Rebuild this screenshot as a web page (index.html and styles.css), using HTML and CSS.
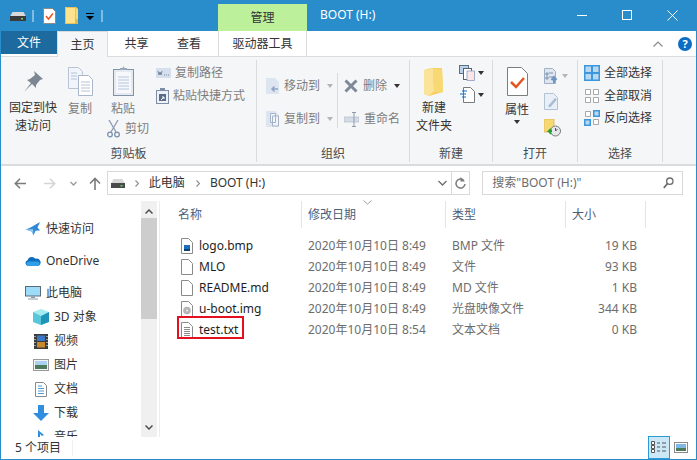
FILE: index.html
```html
<!DOCTYPE html>
<html lang="zh-CN">
<head>
<meta charset="utf-8">
<title>BOOT (H:)</title>
<link rel="stylesheet" href="styles.css">
</head>
<body>
<div class="window">
  <header class="titlebar">
    <div class="qat">
      <svg class="ic-drive" width="16" height="9" viewBox="0 0 16 9"><path d="M2.500 0h11L16 4.500V9H0V4.500z" fill="#d8d8d8"/><rect y="4" width="16" height="5" fill="#3a3a3a"/><rect x="11" y="6" width="2" height="1.500" fill="#5fd35f"/></svg>
      <span class="qat-sep"></span>
      <svg class="ic-qat-doc" width="13" height="16" viewBox="0 0 13 16"><path d="M.5.500h9l3 3v12H.5z" fill="#fff" stroke="#8a8a8a"/><path d="M3 8l2.500 3L10 5.500" fill="none" stroke="#e8541f" stroke-width="1.500"/></svg>
      <svg class="ic-qat-folder" width="13" height="17" viewBox="0 0 13 17"><path d="M0 0h11l2 2v15H0z" fill="#fbd971"/><path d="M.5.500h10v16H.500z" fill="#fde38e" stroke="#e8c15a"/><rect x="10" y="12" width="3" height="5" fill="#e0b84f"/></svg>
      <svg class="ic-qat-drop" width="8" height="8" viewBox="0 0 8 8"><rect x="0" y="0" width="8" height="1" fill="#000"/><path d="M0 3h8L4 7z" fill="#000"/></svg>
      <span class="qat-sep qat-sep-end"></span>
    </div>
    <div class="context-tab">管理</div>
    <div class="title">BOOT (H:)</div>
    <div class="win-controls">
      <svg width="11" height="11" viewBox="0 0 11 11"><path d="M0 5.500h10" stroke="#fff"/></svg>
      <svg width="11" height="11" viewBox="0 0 11 11"><rect x=".5" y=".5" width="9" height="9" fill="none" stroke="#fff"/></svg>
      <svg width="11" height="11" viewBox="0 0 11 11"><path d="M.5.500l10 10M10.500.500l-10 10" stroke="#fff" fill="none"/></svg>
    </div>
  </header>

  <nav class="tabs">
    <div class="tab tab-file">文件</div>
    <div class="tab tab-home">主页</div>
    <div class="tab tab-share">共享</div>
    <div class="tab tab-view">查看</div>
    <div class="tab tab-tools">驱动器工具</div>
    <div class="tabs-right">
      <svg width="10" height="6" viewBox="0 0 10 6"><path d="M.5 5.500L5 1l4.500 4.500" fill="none" stroke="#8a8a8a" stroke-width="1.200"/></svg>
      <svg width="14" height="14" viewBox="0 0 14 14"><circle cx="7" cy="7" r="7" fill="#0b6cc4"/><text x="7" y="11" text-anchor="middle" class="help-q">?</text></svg>
    </div>
  </nav>

  <section class="ribbon">
    <div class="group g-clip">
      <div class="group-body">
        <div class="big b-pin">
          <svg width="22" height="22" viewBox="0 0 22 22"><path d="M12 1l9 8-3 1-4 5 0 3-4-4-8 8 7-9-4-3 3-1 5-4z" fill="#7c8793"/></svg>
          <span class="big-text">固定到快<br>速访问</span>
        </div>
        <div class="big b-copy dim">
          <svg width="25" height="29" viewBox="0 0 25 29"><path d="M.5.500h10l4 4v17H.500z" fill="#f1f4fa" stroke="#b9c3d3"/><path d="M10.500 8.500h10l4 4v16h-14z" fill="#fff" stroke="#a9b6c9"/><path d="M13 15h9M13 18h9M13 21h9M13 24h9M3 6h6M3 9h6M3 12h6" stroke="#b5c2d6"/></svg>
          <span class="big-text">复制</span>
        </div>
        <div class="col-paste">
          <div class="big b-paste dim">
            <svg width="21" height="30" viewBox="0 0 21 30"><rect x=".5" y="3.500" width="20" height="26" fill="#e4e9f2" stroke="#8492a8"/><rect x="3" y="6" width="15" height="21" fill="#f6f8fc"/><path d="M5 11h11M5 14h11M5 17h11M5 20h11M5 23h11" stroke="#b8c6dc"/><path d="M7 4V2h2.500L10.500 0l1 2H14v2z" fill="#9ca9bc"/></svg>
            <span class="big-text">粘贴</span>
          </div>
          <div class="row-cut dim">
            <svg width="13" height="18" viewBox="0 0 13 18"><path d="M2 0l7 12M11 0L4 12" stroke="#8d9bb0" stroke-width="1.300" fill="none"/><circle cx="3" cy="14.500" r="2.300" fill="none" stroke="#7b90ad" stroke-width="1.300"/><circle cx="10" cy="14.500" r="2.300" fill="none" stroke="#7b90ad" stroke-width="1.300"/></svg>
            <span>剪切</span>
          </div>
        </div>
        <div class="col-small dim">
          <div class="small-row">
            <svg width="15" height="10" viewBox="0 0 15 10"><rect width="15" height="10" fill="#d6dfee"/><path d="M2 3l1 4 1-3 1 3 1-4M8 7h1M10 7h1M12 7h1" stroke="#65738a" fill="none" stroke-width=".8"/></svg>
            <span>复制路径</span>
          </div>
          <div class="small-row">
            <svg width="13" height="16" viewBox="0 0 13 16"><rect x=".5" y="2.500" width="12" height="13" fill="#eef2f8" stroke="#7f8ea5"/><rect x="4" y="0" width="5" height="3" fill="#7f8ea5"/><rect x="3" y="6" width="7" height="7" fill="#5b6b84"/><path d="M5 12l3-3M6 9h2v2" stroke="#fff" fill="none"/></svg>
            <span>粘贴快捷方式</span>
          </div>
        </div>
      </div>
      <div class="group-label">剪贴板</div>
    </div>

    <div class="group g-org">
      <div class="group-body">
        <div class="org-col dim">
          <div class="org-row">
            <svg width="13" height="16" viewBox="0 0 13 16"><path d="M0 0h9l4 4v12H0z" fill="#dde5f0"/><path d="M12 11H6M8.500 8.500L6 11l2.500 2.500" stroke="#8fa5c4" stroke-width="1.500" fill="none"/></svg>
            <span>移动到</span><i class="caret caret-gray"></i>
          </div>
          <div class="org-row">
            <svg width="13" height="16" viewBox="0 0 13 16"><path d="M0 0h9l4 4v12H0z" fill="#dde5f0"/><path d="M4.500 2.500h5v9h-5zM6.500 5h6v10h-6z" fill="#f2f5fa" stroke="#a4b3c8"/></svg>
            <span>复制到</span><i class="caret caret-gray"></i>
          </div>
        </div>
        <span class="org-sep"></span>
        <div class="org-col org-col-2 dim">
          <div class="org-row">
            <svg width="14" height="14" viewBox="0 0 14 14"><path d="M1.500 1.500l11 11M12.500 1.500l-11 11" stroke="#7e8a99" stroke-width="3"/></svg>
            <span>删除</span><i class="caret caret-dark"></i>
          </div>
          <div class="org-row">
            <svg width="15" height="15" viewBox="0 0 15 15"><rect x="0" y="5" width="15" height="5" fill="#d5dce6" stroke="#aab5c4" stroke-width=".6"/><path d="M10 .500v14M8 .500h4M8 14.500h4" stroke="#8e9bad" fill="none"/></svg>
            <span>重命名</span>
          </div>
        </div>
      </div>
      <div class="group-label">组织</div>
    </div>

    <div class="group g-new">
      <div class="group-body">
        <div class="big b-newfolder">
          <svg width="20" height="28" viewBox="0 0 20 28"><path d="M0 2l8-2h10l1 24-14 4-5-2z" fill="#f6cf60"/><path d="M0 2c3 0 8-1 9-2l1 23-5 5-5-2z" fill="#fbe49a"/><path d="M9 1h9l1 23H10z" fill="#f8d873"/></svg>
          <span class="big-text">新建<br>文件夹</span>
        </div>
        <div class="new-side">
          <div class="side-row">
            <svg width="16" height="16" viewBox="0 0 16 16"><rect x=".5" y=".5" width="9" height="8" fill="#bcd2e8" stroke="#5a7086"/><rect x="4.500" y="3.500" width="8" height="11" fill="#fff" stroke="#56626f"/><rect x="8" y="6" width="7.500" height="9.500" fill="#fbe6e6" stroke="#8d9cc0" stroke-width=".8"/></svg>
            <i class="caret caret-dark"></i>
          </div>
          <div class="side-row">
            <svg width="16" height="16" viewBox="0 0 16 16"><path d="M4.500.500h7l4 4v11h-11z" fill="#fff" stroke="#7a7a7a"/><path d="M3 4h5M1 7h6M3 10h4" stroke="#0b6cc4" fill="none"/></svg>
            <i class="caret caret-dark"></i>
          </div>
        </div>
      </div>
      <div class="group-label">新建</div>
    </div>

    <div class="group g-open">
      <div class="group-body">
        <div class="big b-props">
          <svg width="21" height="29" viewBox="0 0 21 29"><path d="M.5.500h14l6 6v22H.500z" fill="#fff" stroke="#7d7d7d"/><path d="M4 15l5 5 8-9" fill="none" stroke="#e8541f" stroke-width="2.500"/></svg>
          <span class="big-text">属性</span>
          <i class="caret caret-dark"></i>
        </div>
        <div class="open-side">
          <div class="side-row dim">
            <svg width="15" height="16" viewBox="0 0 15 16"><path d="M.5.500h8l3 3v12H.500z" fill="#dfe6f0" stroke="#9fb0c6"/><path d="M2 5h2v2H2zM2 9h2v2H2zM5 5h4M5 9h4" stroke="#7f93ae" fill="none"/><path d="M10 15v-4M7.500 12L10 9l2.500 3" stroke="#6f93c5" stroke-width="2" fill="none"/></svg>
            <i class="caret caret-gray"></i>
          </div>
          <div class="side-row dim">
            <svg width="14" height="17" viewBox="0 0 14 17"><path d="M.5.500h9l4 4v12H.500z" fill="#e9eff7" stroke="#b3c1d4"/><path d="M4 13l7-8 2 1.500-7 8z" fill="#a8bbd4"/></svg>
          </div>
          <div class="side-row">
            <svg width="17" height="18" viewBox="0 0 17 18"><rect width="10" height="13" fill="#f7d774" stroke="#d9b552" stroke-width=".8"/><circle cx="11.500" cy="12" r="5" fill="#e5e7ea" stroke="#7b7b7b"/><path d="M11.500 9v3l2-2" stroke="#555" fill="none"/><path d="M8 12l-3 0 2-2M5 12l2 3" stroke="#2e9e3a" stroke-width="2" fill="none"/></svg>
          </div>
        </div>
      </div>
      <div class="group-label">打开</div>
    </div>

    <div class="group g-select">
      <div class="group-body select-body">
        <div class="small-row">
          <svg width="16" height="16" viewBox="0 0 16 16"><rect width="16" height="16" fill="#3d97dc"/><path d="M1.500 1.500h5.500v5.500H1.500zM9 1.500h5.500v5.500H9zM1.500 9h5.500v5.500H1.500zM9 9h5.500v5.500H9z" fill="#b7d8f2"/></svg>
          <span>全部选择</span>
        </div>
        <div class="small-row">
          <svg width="16" height="16" viewBox="0 0 16 16"><path d="M1.500 1.500h5v5h-5zM9.500 1.500h5v5h-5zM1.500 9.500h5v5h-5zM9.500 9.500h5v5h-5z" fill="#fff" stroke="#a8a8a8"/></svg>
          <span>全部取消</span>
        </div>
        <div class="small-row">
          <svg width="16" height="16" viewBox="0 0 16 16"><path d="M1.500 1.500h5v5h-5z" fill="#fff" stroke="#a8a8a8"/><rect x="9" y="0" width="7" height="7" fill="#3d97dc"/><rect x="10.500" y="1.500" width="4" height="4" fill="#b7d8f2"/><rect x="0" y="9" width="7" height="7" fill="#3d97dc"/><rect x="1.500" y="10.500" width="4" height="4" fill="#b7d8f2"/><path d="M9.500 9.500h5v5h-5z" fill="#fff" stroke="#a8a8a8"/></svg>
          <span>反向选择</span>
        </div>
      </div>
      <div class="group-label">选择</div>
    </div>
  </section>

  <div class="navbar">
    <div class="nav-buttons">
      <svg width="12" height="11" viewBox="0 0 12 11"><path d="M12 5.500H1.500M6 .800L1.300 5.500 6 10.200" fill="none" stroke="#7b7b7b" stroke-width="1.600"/></svg>
      <svg width="12" height="11" viewBox="0 0 12 11"><path d="M0 5.500h10.500M6 .800l4.700 4.700L6 10.200" fill="none" stroke="#d5d5d5" stroke-width="1.600"/></svg>
      <svg width="7" height="5" viewBox="0 0 7 5"><path d="M.5 1L3.500 4l3-3" fill="none" stroke="#9a9a9a" stroke-width="1.300"/></svg>
      <svg width="12" height="13" viewBox="0 0 12 13"><path d="M6 13V1.500M1 6.500l5-5 5 5" fill="none" stroke="#7b7b7b" stroke-width="1.600"/></svg>
    </div>
    <div class="address">
      <svg class="addr-drive" width="14" height="9" viewBox="0 0 14 9"><path d="M2.500 0h9L14 4.500V9H0V4.500z" fill="#d8d8d8"/><rect y="4" width="14" height="5" fill="#4a4a4a"/><rect x="9.500" y="6" width="2" height="1.500" fill="#5fd35f"/></svg>
      <svg class="crumb-arrow" width="4" height="7" viewBox="0 0 4 7"><path d="M.5.500l3 3-3 3" fill="none" stroke="#8a8a8a" stroke-width="1.100"/></svg>
      <span class="crumb">此电脑</span>
      <svg class="crumb-arrow" width="4" height="7" viewBox="0 0 4 7"><path d="M.5.500l3 3-3 3" fill="none" stroke="#8a8a8a" stroke-width="1.100"/></svg>
      <span class="crumb">BOOT (H:)</span>
      <svg class="addr-chev" width="9" height="6" viewBox="0 0 9 6"><path d="M.5 1l4 4 4-4" fill="none" stroke="#6d6d6d" stroke-width="1.300"/></svg>
      <div class="addr-refresh">
        <svg width="11" height="12" viewBox="0 0 11 12"><path d="M8.800 3.500A4.500 4.500 0 1 0 10 7" fill="none" stroke="#7b7b7b" stroke-width="1.500"/><path d="M5.500 0v4.500H10z" fill="#7b7b7b"/></svg>
      </div>
    </div>
    <div class="search">
      <span>搜索"BOOT (H:)"</span>
      <svg width="11" height="12" viewBox="0 0 11 12"><circle cx="6.800" cy="4.200" r="3.200" fill="none" stroke="#6d6d6d" stroke-width="1.300"/><path d="M4.600 6.500L.8 10.800" stroke="#6d6d6d" stroke-width="1.800"/></svg>
    </div>
  </div>

  <main class="content">
    <aside class="sidebar">
      <div class="tree">
        <div class="tree-item ti-top">
          <svg width="14" height="14" viewBox="0 0 14 14"><path d="M14 0l-2.500 5.500L14 8.500l-4.500.3L7.500 13.500 5.800 9.500 0 7.500l5-2.200z" fill="#2f88d8"/><path d="M7.500 13.500L5.800 9.500 0 7.500l7-.5z" fill="#8cc8f2"/></svg>
          <span>快速访问</span>
        </div>
        <div class="tree-item ti-top">
          <svg width="16" height="10" viewBox="0 0 16 10"><path d="M3 10a3 3 0 0 1-.5-5.800A4.500 4.500 0 0 1 10.500 2.800 3.500 3.500 0 0 1 13 10z" fill="#0f6cbd"/><path d="M3 10a2.300 2.300 0 0 1 .5-4.500h9.800A2.400 2.400 0 0 1 13 10z" fill="#2f9fe8"/></svg>
          <span>OneDrive</span>
        </div>
        <div class="tree-item ti-top ti-pc">
          <svg width="16" height="14" viewBox="0 0 16 14"><rect x=".5" y=".5" width="15" height="9.500" fill="#9cdcf8" stroke="#5b6a78"/><path d="M6 10.500h4V12H6zM3 12.500h10v1H3z" fill="#8c9aa8"/></svg>
          <span>此电脑</span>
        </div>
        <div class="tree-item ti-sub">
          <svg width="16" height="16" viewBox="0 0 16 16"><path d="M8 0l8 3v10l-8 3-8-3V3z" fill="#a6ebf0"/><path d="M8 7v9l8-3V3z" fill="#1f93b8"/><path d="M0 3l8 4v9l-8-3z" fill="#58c7dc"/></svg>
          <span>3D 对象</span>
        </div>
        <div class="tree-item ti-sub">
          <svg width="14" height="15" viewBox="0 0 14 15"><rect width="14" height="15" fill="#3c3c3c"/><rect x="3" y="1.500" width="8" height="5.500" fill="#3a78c4"/><rect x="3" y="8" width="8" height="5.500" fill="#c98a2e"/><path d="M1 2v1M1 5v1M1 8v1M1 11v1M13 2v1M13 5v1M13 8v1M13 11v1" stroke="#fff"/></svg>
          <span>视频</span>
        </div>
        <div class="tree-item ti-sub">
          <svg width="16" height="12" viewBox="0 0 16 12"><rect x=".5" y=".5" width="15" height="11" fill="#f4f4f4" stroke="#9a9a9a"/><rect x="2" y="2" width="12" height="4" fill="#a9d2ef"/><rect x="2" y="6" width="12" height="4" fill="#4d7a5a"/></svg>
          <span>图片</span>
        </div>
        <div class="tree-item ti-sub">
          <svg width="12" height="15" viewBox="0 0 12 15"><path d="M.5.500h8l3 3v11H.500z" fill="#fff" stroke="#8a8a8a"/><path d="M3 4h4M3 6.500h6M3 9h6M3 11.500h6" stroke="#4f9bd4"/></svg>
          <span>文档</span>
        </div>
        <div class="tree-item ti-sub">
          <svg width="16" height="16" viewBox="0 0 16 16"><path d="M5 0h6v8h5l-8 8-8-8h5z" fill="#2f8ee0"/></svg>
          <span>下载</span>
        </div>
        <div class="tree-item ti-sub">
          <svg width="12" height="14" viewBox="0 0 12 14"><path d="M3 0l6 5-2 1-2-2v10H3z" fill="#2f8ee0"/></svg>
          <span>音乐</span>
        </div>
      </div>
      <div class="scrollbar">
        <svg width="8" height="5" viewBox="0 0 8 5"><path d="M.5 4.500L4 1l3.500 3.500" fill="none" stroke="#505050" stroke-width="1.500"/></svg>
        <div class="scroll-track"><div class="scroll-thumb"></div></div>
        <svg width="8" height="5" viewBox="0 0 8 5"><path d="M.5.500L4 4 7.500.500" fill="none" stroke="#505050" stroke-width="1.500"/></svg>
      </div>
    </aside>
    <div class="files">
      <div class="file-head">
        <div class="hc c-name">名称</div>
        <div class="hc c-date">修改日期<svg class="sort" width="9" height="5" viewBox="0 0 9 5"><path d="M.5.500l4 3.500 4-3.500" fill="none" stroke="#a0a0a0"/></svg></div>
        <div class="hc c-type">类型</div>
        <div class="hc c-size">大小</div>
      </div>
      <div class="file-row">
        <div class="c-name name"><svg width="12" height="16" viewBox="0 0 12 16"><path d="M.5.500h7l4 4v11H.500z" fill="#fff" stroke="#8a8a8a"/><rect x="3" y="7" width="6" height="6" fill="#1f6fb8"/><rect x="3" y="11" width="6" height="2" fill="#0c3f72"/></svg><span>logo.bmp</span></div>
        <div class="c-date">2020年10月10日 8:49</div><div class="c-type">BMP 文件</div><div class="c-size size">19 KB</div>
      </div>
      <div class="file-row">
        <div class="c-name name"><svg width="12" height="16" viewBox="0 0 12 16"><path d="M.5.500h7l4 4v11H.500z" fill="#fff" stroke="#8a8a8a"/></svg><span>MLO</span></div>
        <div class="c-date">2020年10月10日 8:49</div><div class="c-type">文件</div><div class="c-size size">93 KB</div>
      </div>
      <div class="file-row">
        <div class="c-name name"><svg width="12" height="16" viewBox="0 0 12 16"><path d="M.5.500h7l4 4v11H.500z" fill="#fff" stroke="#8a8a8a"/></svg><span>README.md</span></div>
        <div class="c-date">2020年10月10日 8:49</div><div class="c-type">MD 文件</div><div class="c-size size">1 KB</div>
      </div>
      <div class="file-row">
        <div class="c-name name"><svg width="12" height="16" viewBox="0 0 12 16"><path d="M.5.500h7l4 4v11H.500z" fill="#fff" stroke="#8a8a8a"/><circle cx="6" cy="9.500" r="3.800" fill="#b5b5b5"/><circle cx="6" cy="9.500" r="1" fill="#eee"/></svg><span>u-boot.img</span></div>
        <div class="c-date">2020年10月10日 8:49</div><div class="c-type">光盘映像文件</div><div class="c-size size">344 KB</div>
      </div>
      <div class="file-row">
        <div class="c-name name"><svg width="12" height="16" viewBox="0 0 12 16"><path d="M.5.500h7l4 4v11H.500z" fill="#fff" stroke="#8a8a8a"/><path d="M3 5.500h6M3 7.500h6M3 9.500h6M3 11.500h6M3 13.500h6" stroke="#8a8a8a"/></svg><span>test.txt</span></div>
        <div class="c-date">2020年10月10日 8:54</div><div class="c-type">文本文档</div><div class="c-size size">0 KB</div>
      </div>
      <div class="highlight"></div>
    </div>
  </main>

  <footer class="status">
    <span class="status-text">5 个项目</span>
    <span class="status-sep"></span>
    <div class="view-btns">
      <div class="view-btn active">
        <svg width="17" height="13" viewBox="0 0 17 13"><path d="M.5.500h3v3h-3zM.5 4.500h3v3h-3zM.5 8.500h3v3h-3z" fill="#fff" stroke="#555"/><path d="M6 2h3M11 2h4M6 6h3M11 6h4M6 10h3M11 10h4" stroke="#555"/></svg>
      </div>
      <div class="view-btn">
        <svg width="14" height="12" viewBox="0 0 14 12"><rect x=".5" y=".5" width="13" height="10" fill="#fff" stroke="#8a8a8a"/><rect x="2" y="2" width="10" height="4" fill="#7fb8e6"/><rect x="2" y="6" width="10" height="3" fill="#4d7a5a"/></svg>
      </div>
    </div>
  </footer>
</div>
</body>
</html>
```
FILE: styles.css
```css
* { box-sizing: border-box; }
html, body { margin: 0; padding: 0; }
body { width: 697px; height: 460px; overflow: hidden; font: 12px/16px "Noto Sans", "Noto Sans CJK SC", sans-serif; color: #1e1e1e; background: #fff; }
svg { display: block; flex: none; }
.window { width: 697px; height: 460px; border: 1px solid #2a8dcb; border-top: 0; display: flex; flex-direction: column; overflow: hidden; }

/* title bar */
.titlebar { height: 31px; background: #2a8dcb; display: flex; align-items: flex-end; color: #fff; flex: none; }
.qat { width: 217px; height: 31px; display: flex; align-items: center; padding: 0 0 0 9px; }
.ic-drive { margin-top: 2px; }
.qat-sep { width: 2px; height: 12px; background: #7fbce2; margin: 0 0 0 6px; }
.ic-qat-doc { margin-left: 9px; }
.ic-qat-folder { margin-left: 9px; }
.ic-qat-drop { margin-left: 8px; margin-top: 2px; }
.qat-sep-end { margin-left: 7px; }
.context-tab { width: 89px; height: 27px; background: #bdf09b; color: #333; text-align: center; line-height: 27px; }
.title { padding-left: 13px; height: 31px; line-height: 30px; flex: 1; }
.win-controls { display: flex; height: 31px; align-items: center; gap: 34px; padding-right: 18px; }

/* tabs */
.tabs { height: 26px; display: flex; flex: none; background: #fff; border-bottom: 1px solid #dadbdc; position: relative; }
.tab { height: 26px; text-align: center; line-height: 25px; color: #333; flex: none; }
.tab-file { width: 56px; height: 23px; background: #1c6a9e; color: #fff; line-height: 24px; }
.tab-home { width: 51px; background: #f5f6f7; border: 1px solid #dadbdc; border-bottom: 0; position: relative; z-index: 1; }
.tab-share { width: 57px; }
.tab-view { width: 48px; margin-right: 5px; }
.tab-tools { width: 89px; border-left: 1px solid #dadbdc; border-right: 1px solid #dadbdc; height: 25px; }
.tabs-right { flex: 1; display: flex; align-items: center; justify-content: flex-end; gap: 15px; padding-right: 4px; }
.help-q { font: bold 11px "Noto Sans", sans-serif; fill: #fff; }

/* ribbon */
.ribbon { height: 109px; background: #f5f6f7; border-bottom: 2px solid #dadbdc; display: flex; flex: none; color: #333; }
.group { display: flex; flex-direction: column; border-right: 1px solid #dadbdc; margin: 3px 0 2px; flex: none; }
.group-body { flex: 1; display: flex; min-height: 0; }
.group-label { height: 18px; line-height: 20px; text-align: center; color: #4a4a4a; flex: none; }
.g-clip { width: 256px; }
.g-org { width: 153px; }
.g-new { width: 83px; }
.g-open { width: 85px; }
.g-select { width: 85px; }
.dim { color: #7d7d7d; }
.big { display: flex; flex-direction: column; align-items: center; }
.big-text { line-height: 18px; text-align: center; }
.b-pin { width: 50px; margin-left: 7px; padding-top: 10px; }
.b-pin .big-text { margin-top: 7px; }
.b-copy { width: 42px; margin-left: 1px; padding-top: 7px; }
.b-copy .big-text { margin-top: 4px; }
.col-paste { width: 54px; display: flex; flex-direction: column; }
.b-paste { width: 44px; padding-top: 6px; }
.b-paste .big-text { margin-top: 4px; }
.row-cut { display: flex; align-items: center; gap: 5px; margin: 2px 0 0 6px; }
.col-small { padding: 4px 0 0 1px; display: flex; flex-direction: column; gap: 5px; }
.small-row { display: flex; align-items: center; gap: 4px; height: 18px; white-space: nowrap; }
.org-col { display: flex; flex-direction: column; gap: 13px; padding: 16px 0 0 9px; width: 80px; }
.org-row { display: flex; align-items: center; gap: 5px; height: 20px; }
.caret { display: block; width: 0; height: 0; border-left: 3.500px solid transparent; border-right: 3.500px solid transparent; border-top: 4px solid #444; flex: none; }
.caret-gray { border-top-color: #b5b5b5; }
.caret-dark { border-top-color: #333; }
.org-row .caret { margin-left: 2px; }
.org-sep { width: 1px; height: 55px; background: #dadbdc; margin-top: 13px; }
.org-col-2 { padding-left: 6px; width: 70px; }
.b-newfolder { width: 48px; padding-top: 8px; }
.b-newfolder .big-text { margin-top: 3px; }
.new-side { display: flex; flex-direction: column; gap: 6px; padding: 5px 0 0 1px; }
.side-row { display: flex; align-items: center; }
.side-row .caret { margin-left: 3px; }
.b-props { width: 48px; padding-top: 7px; }
.b-props .big-text { margin-top: 5px; }
.b-props .caret { margin-top: 1px; }
.open-side { display: flex; flex-direction: column; gap: 9px; padding: 8px 0 0 3px; }
.select-body { flex-direction: column; gap: 4.500px; padding: 4px 0 0 6px; }

/* nav */
.navbar { height: 35px; flex: none; display: flex; align-items: flex-start; padding: 5px 13px 0; background: #fff; }
.nav-buttons { display: flex; align-items: center; width: 93px; height: 24px; }
.nav-buttons svg:nth-child(2) { margin-left: 18px; }
.nav-buttons svg:nth-child(3) { margin-left: 14px; }
.nav-buttons svg:nth-child(4) { margin-left: 12px; }
.address { width: 364px; height: 24px; border: 1px solid #d9d9d9; display: flex; align-items: center; padding-left: 3px; }
.addr-drive { margin-right: 10px; }
.crumb { margin: 0 11px 0 10px; color: #333; white-space: nowrap; }
.addr-chev { margin-left: auto; margin-right: 2px; }
.addr-refresh { width: 18px; height: 22px; border-left: 1px solid #d9d9d9; display: flex; align-items: center; justify-content: center; margin-left: 2px; }
.search { width: 201px; height: 24px; border: 1px solid #d9d9d9; margin-left: 12px; display: flex; align-items: center; justify-content: space-between; padding: 0 8px 0 9px; color: #6d6d6d; white-space: nowrap; }

/* content */
.content { flex: 1; min-height: 0; display: flex; }
.sidebar { width: 159px; display: flex; border-right: 1px solid #ececec; flex: none; }
.tree { width: 140px; overflow: hidden; height: 236px; padding-top: 20px; }
.tree-item { display: grid; grid-template-columns: 16px auto; column-gap: 5px; align-items: center; justify-items: center; white-space: nowrap; color: #333; }
.tree-item span { justify-self: start; }
.ti-top { height: 16px; padding-left: 24px; margin-bottom: 16px; }
.ti-top.ti-pc { margin-bottom: 4px; }
.ti-sub { height: 24px; padding-left: 32px; }
.scrollbar { width: 16px; background: #f0f0f0; display: flex; flex-direction: column; align-items: center; justify-content: space-between; padding: 8px 0 7px; }
.scroll-track { flex: 1; width: 16px; padding-top: 4px; }
.scroll-thumb { height: 101px; background: #cdcdcd; }
.files { flex: 1; position: relative; min-width: 0; }
.file-head { display: flex; height: 27px; margin-bottom: 7px; color: #4c607a; }
.file-row { display: flex; height: 21px; align-items: center; color: #6d6d6d; white-space: nowrap; }
.c-name { width: 142px; padding-left: 18px; flex: none; }
.c-date { width: 144px; padding-left: 6px; flex: none; position: relative; }
.c-type { width: 120px; padding-left: 6px; flex: none; }
.c-size { width: 80px; padding-left: 6px; flex: none; }
.hc { height: 27px; line-height: 27px; border-right: 1px solid #e5e5e5; }
.sort { position: absolute; left: 61px; top: -1px; }
.name { display: flex; align-items: center; gap: 6px; padding-left: 21px; color: #1e1e1e; }
.size { text-align: right; padding: 0 9px 0 0; }
.highlight { position: absolute; left: 17px; top: 115px; width: 67px; height: 23px; border: 2px solid #e5101f; }

/* status */
.status { height: 22px; flex: none; display: flex; align-items: center; color: #333; }
.status-text { padding-left: 14px; width: 71px; }
.status-sep { width: 1px; height: 16px; background: #efefef; }
.view-btns { margin-left: auto; display: flex; align-items: flex-end; padding-right: 4px; height: 22px; }
.view-btn { width: 22px; height: 22px; display: flex; align-items: center; justify-content: center; }
.view-btn.active { height: 23px; background: #cce8f7; border: 1px solid #2b9bd8; }
```
